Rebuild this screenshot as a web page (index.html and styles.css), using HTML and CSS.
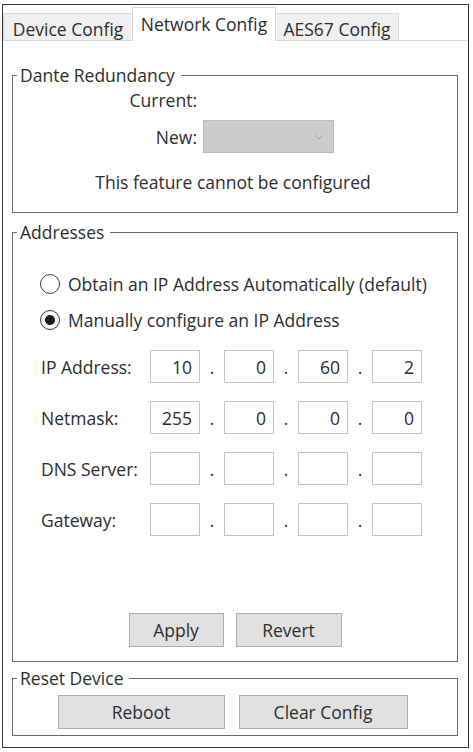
FILE: index.html
```html
<!DOCTYPE html>
<html lang="en">
<head>
  <meta charset="UTF-8">
  <meta name="viewport" content="width=device-width, initial-scale=1.0">
  <title>Network Config</title>
  <link rel="stylesheet" href="styles.css">
</head>
<body>
  <div class="window">
    <div class="tabs">
      <div class="tab tab-device">Device Config</div>
      <div class="tab tab-network active">Network Config</div>
      <div class="tab tab-aes">AES67 Config</div>
    </div>

    <div class="page">
      <fieldset class="group group-dante">
        <legend>Dante Redundancy</legend>
        <div class="red-row red-current">
          <span class="red-label">Current:</span>
        </div>
        <div class="red-row red-new">
          <span class="red-label">New:</span>
          <div class="combo">
            <svg width="10" height="6" viewBox="0 0 10 6"><polyline points="1,1 5,5 9,1" fill="none" stroke="#a3a3a3" stroke-width="1"/></svg>
          </div>
        </div>
        <div class="red-note">This feature cannot be configured</div>
      </fieldset>

      <fieldset class="group group-addresses">
        <legend>Addresses</legend>
        <label class="radio-row radio-auto">
          <input type="radio" name="ipmode">
          <span>Obtain an IP Address Automatically (default)</span>
        </label>
        <label class="radio-row radio-manual">
          <input type="radio" name="ipmode" checked>
          <span>Manually configure an IP Address</span>
        </label>

        <div class="ip-row ip-first">
          <span class="ip-label">IP Address:</span>
          <input class="octet" type="text" value="10">
          <span class="dot">.</span>
          <input class="octet" type="text" value="0">
          <span class="dot">.</span>
          <input class="octet" type="text" value="60">
          <span class="dot">.</span>
          <input class="octet" type="text" value="2">
        </div>
        <div class="ip-row">
          <span class="ip-label">Netmask:</span>
          <input class="octet" type="text" value="255">
          <span class="dot">.</span>
          <input class="octet" type="text" value="0">
          <span class="dot">.</span>
          <input class="octet" type="text" value="0">
          <span class="dot">.</span>
          <input class="octet" type="text" value="0">
        </div>
        <div class="ip-row">
          <span class="ip-label">DNS Server:</span>
          <input class="octet" type="text">
          <span class="dot">.</span>
          <input class="octet" type="text">
          <span class="dot">.</span>
          <input class="octet" type="text">
          <span class="dot">.</span>
          <input class="octet" type="text">
        </div>
        <div class="ip-row">
          <span class="ip-label">Gateway:</span>
          <input class="octet" type="text">
          <span class="dot">.</span>
          <input class="octet" type="text">
          <span class="dot">.</span>
          <input class="octet" type="text">
          <span class="dot">.</span>
          <input class="octet" type="text">
        </div>

        <div class="button-row apply-row">
          <button class="btn btn-apply">Apply</button>
          <button class="btn btn-revert">Revert</button>
        </div>
      </fieldset>

      <fieldset class="group group-reset">
        <legend>Reset Device</legend>
        <div class="button-row reset-row">
          <button class="btn btn-reboot">Reboot</button>
          <button class="btn btn-clear">Clear Config</button>
        </div>
      </fieldset>
    </div>
  </div>
</body>
</html>
```

FILE: styles.css
```css
body {
  margin: 0;
  padding: 4px 0 0 2px;
  background-color: white;
  font-family: "Open Sans", "Noto Sans", sans-serif;
  font-size: 17.5px;
  color: #2e2e2e;
}

.window {
  box-sizing: border-box;
  width: 467px;
  height: 744px;
  border: 1px solid #3a3a3a;
  display: flex;
  flex-direction: column;
}

/* tab strip */
.tabs {
  display: flex;
  align-items: flex-end;
  height: 35px;
}

.tab {
  box-sizing: border-box;
  height: 27px;
  padding-top: 5px;
  line-height: 20px;
  text-align: center;
  background-color: #f0f0f0;
  border: 1px solid #dadada;
  border-bottom: none;
  white-space: nowrap;
}

.tab-device {
  width: 130px;
}

.tab-network {
  width: 144px;
  margin-left: -1px;
}

.tab-aes {
  width: 124px;
  margin-left: -1px;
}

.tab.active {
  position: relative;
  height: 34px;
  margin-bottom: -1px;
  padding-top: 6px;
  background-color: white;
}

.page {
  flex: 1;
  border-top: 1px solid #dadada;
  padding: 0 10px 0 9px;
}

/* group boxes */
.group {
  margin: 0;
  padding: 0;
  border: 1px solid #6c6c6c;
  min-width: 0;
}

.group legend {
  margin-left: 4px;
  padding: 0 6px 0 3px;
  line-height: 20px;
}

.group-dante {
  margin-top: 24px;
  padding-bottom: 18px;
}

.red-row {
  display: flex;
  align-items: center;
}

.red-label {
  width: 184px;
  text-align: right;
  margin-right: 6px;
}

.red-current {
  margin-top: 3px;
  line-height: 24px;
}

.red-new {
  margin-top: 8px;
}

.combo {
  box-sizing: border-box;
  width: 131px;
  height: 33px;
  background-color: #cccccc;
  border: 1px solid #bdbdbd;
  display: flex;
  align-items: center;
  justify-content: flex-end;
  padding-right: 9px;
}

.red-note {
  margin-top: 17px;
  line-height: 24px;
  text-align: center;
  padding-right: 4px;
}

.group-addresses {
  margin-top: 9px;
  padding-bottom: 14px;
}

.radio-row {
  display: flex;
  align-items: center;
  padding-left: 27px;
  line-height: 24px;
}

.radio-auto {
  margin-top: 30px;
}

.radio-manual {
  margin-top: 12px;
}

.radio-row input {
  appearance: none;
  box-sizing: border-box;
  width: 20px;
  height: 20px;
  margin: 0 8px 0 0;
  border: 1.5px solid #3c3c3c;
  border-radius: 50%;
  background-color: white;
}

.radio-row input:checked {
  background: radial-gradient(circle, #1c1c1c 0 4.5px, white 5.5px);
}

.ip-row {
  display: flex;
  align-items: center;
  padding-left: 28px;
  margin-top: 18px;
  height: 33px;
}

.ip-label {
  width: 109px;
}

.octet {
  box-sizing: border-box;
  width: 50px;
  height: 33px;
  margin: 0;
  padding: 0 7px 0 0;
  border: 1px solid #c4c4c4;
  text-align: right;
  font-family: inherit;
  font-size: 17.5px;
  color: #2e2e2e;
  background-color: white;
}

.dot {
  width: 24px;
  text-align: center;
  line-height: 33px;
  padding-top: 2px;
}

.button-row {
  display: flex;
  justify-content: center;
}

.apply-row {
  margin-top: 77px;
  gap: 12px;
}

.btn {
  box-sizing: border-box;
  height: 34px;
  padding: 0;
  background-color: #e1e1e1;
  border: 1px solid #adadad;
  font-family: inherit;
  font-size: 17.5px;
  color: #2e2e2e;
}

.btn-apply {
  width: 95px;
}

.btn-revert {
  width: 106px;
}

.group-reset {
  margin-top: 6px;
  padding-bottom: 6px;
}

.reset-row {
  margin-top: 7px;
  gap: 14px;
  padding-right: 5px;
}

.btn-reboot {
  width: 167px;
}

.btn-clear {
  width: 169px;
}
```
